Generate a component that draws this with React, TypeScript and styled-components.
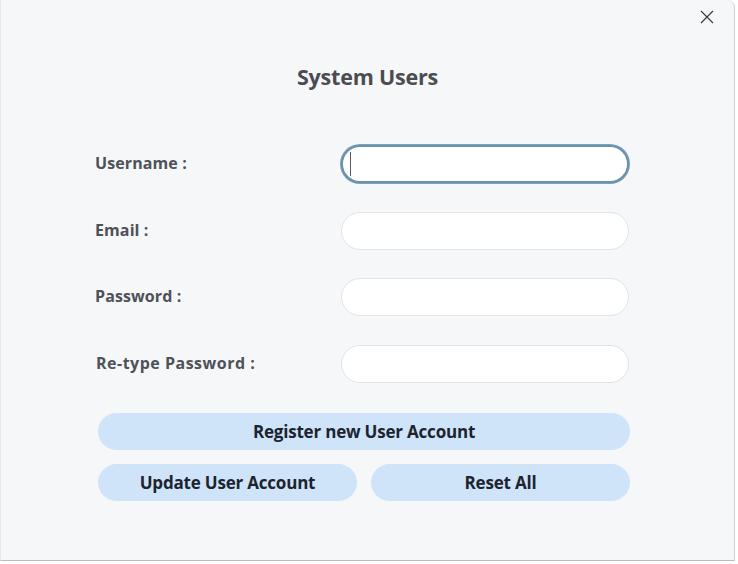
import React from 'react';
import styled, {createGlobalStyle} from "styled-components";

const GlobalStyle = createGlobalStyle`
  html, body {
    margin: 0;
    padding: 0;
    background: #ffffff;
  }
  body {
    font-family: "Open Sans", "Noto Sans", sans-serif;
  }
`

const fields = [
  {id: 'username', label: 'Username :', type: 'text'},
  {id: 'email', label: 'Email :', type: 'email'},
  {id: 'password', label: 'Password :', type: 'password'},
  {id: 'retype', label: 'Re-type Password :', type: 'password'},
]

const CloseIcon = () => (
  <svg width="14" height="14" viewBox="0 0 14 14" fill="none">
    <path d="M1 1L13 13M13 1L1 13" stroke="#3a3a3a" strokeWidth="1.2"/>
  </svg>
)

export default function App() {
  return (
    <>
      <GlobalStyle/>
      <Window>
        <CloseButton aria-label="Close"><CloseIcon/></CloseButton>
        <Title>System Users</Title>
        <Form>
          {fields.map((f, i) =>
            <React.Fragment key={f.id}>
              <Label htmlFor={f.id} shift={i === 3}>{f.label}</Label>
              <Field>
                <Input id={f.id} type={f.type} active={i === 0}/>
                {i === 0 && <Caret/>}
              </Field>
            </React.Fragment>
          )}
        </Form>
        <Buttons>
          <Button wide>Register new User Account</Button>
          <Button>Update User Account</Button>
          <Button>Reset All</Button>
        </Buttons>
      </Window>
    </>
  );
}

const Window = styled.div`
  position: relative;
  box-sizing: border-box;
  width: 735px;
  height: 561px;
  background: #f5f7f9;
  border-right: 1px solid #cfd2d5;
  border-bottom: 1px solid #b9bcbf;
  border-left: 1px solid #e6e8ea;
  border-top-right-radius: 8px;
  display: flex;
  flex-direction: column;
  padding: 62px 0 0 94px;
`
const CloseButton = styled.button`
  position: absolute;
  top: 9px;
  right: 19px;
  width: 16px;
  height: 16px;
  padding: 0;
  border: none;
  background: transparent;
  display: flex;
  align-items: center;
  justify-content: center;
`
const Title = styled.h1`
  margin: 0 0 0 -94px;
  text-align: center;
  font-size: 21.5px;
  line-height: 30px;
  font-weight: 700;
  color: #4b4c50;
  letter-spacing: -0.2px;
`
const Form = styled.div`
  display: grid;
  grid-template-columns: 246px 288px;
  grid-auto-rows: 38px;
  row-gap: 28.5px;
  align-items: center;
  margin-top: 53px;
`
const Label = styled.label<{shift?: boolean}>`
  font-size: 16px;
  font-weight: 700;
  color: #4f5158;
  letter-spacing: ${({shift}) => shift ? '0.5px' : '0.1px'};
  margin-top: -2px;
  padding-left: ${({shift}) => shift ? '1px' : '0'};
`
const Field = styled.div`
  position: relative;
  height: 38px;
`
const Input = styled.input<{active?: boolean}>`
  box-sizing: border-box;
  width: 288px;
  height: 38px;
  border-radius: 19px;
  background: #ffffff;
  border: ${({active}) => active ? '2.5px solid #6b92ad' : '1px solid #dfe4ea'};
  box-shadow: ${({active}) => active ? '0 0 0 1px #7d9fb7' : 'none'};
  padding: 0 10px;
  font-size: 15px;
  font-family: "Open Sans", sans-serif;
  outline: none;
`
const Caret = styled.span`
  position: absolute;
  left: 9px;
  top: 7px;
  width: 1px;
  height: 24px;
  background: #555b60;
`
const Buttons = styled.div`
  display: grid;
  grid-template-columns: 1fr 1fr;
  grid-auto-rows: 37px;
  gap: 14px 14px;
  width: 532px;
  margin-top: 30px;
  margin-left: 3px;
`
const Button = styled.button<{wide?: boolean}>`
  grid-column: ${({wide}) => wide ? '1 / -1' : 'auto'};
  border: none;
  border-radius: 19px;
  background: #cfe3f9;
  color: #1c2430;
  font-family: "Open Sans", "Noto Sans", sans-serif;
  font-size: 17px;
  font-weight: 700;
  letter-spacing: -0.2px;
  cursor: pointer;
`
